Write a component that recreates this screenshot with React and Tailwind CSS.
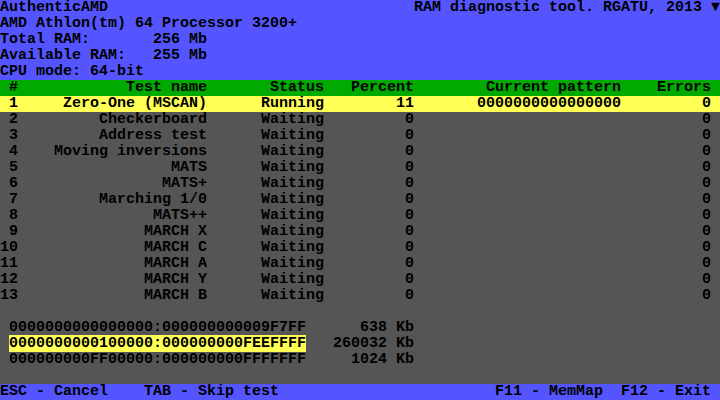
import React from 'react';

const tests = [
    ['Zero-One (MSCAN)', 'Running', '11', '0000000000000000', '0'],
    ['Checkerboard', 'Waiting', '0', '', '0'],
    ['Address test', 'Waiting', '0', '', '0'],
    ['Moving inversions', 'Waiting', '0', '', '0'],
    ['MATS', 'Waiting', '0', '', '0'],
    ['MATS+', 'Waiting', '0', '', '0'],
    ['Marching 1/0', 'Waiting', '0', '', '0'],
    ['MATS++', 'Waiting', '0', '', '0'],
    ['MARCH X', 'Waiting', '0', '', '0'],
    ['MARCH C', 'Waiting', '0', '', '0'],
    ['MARCH A', 'Waiting', '0', '', '0'],
    ['MARCH Y', 'Waiting', '0', '', '0'],
    ['MARCH B', 'Waiting', '0', '', '0'],
];

const ranges = [
    ['0000000000000000:000000000009F7FF', '638 Kb', false],
    ['0000000000100000:000000000FEEFFFF', '260032 Kb', true],
    ['000000000FF00000:000000000FFFFFFF', '1024 Kb', false],
];

// text mode: 80 cols x 25 rows, 9x16 cells
const pad = (s, n) => String(s).padStart(n, ' ');
const tableLine = (a, b, c, d, e, f) =>
    pad(a, 2) + pad(b, 21) + pad(c, 13) + pad(d, 10) + pad(e, 23) + pad(f, 10) + ' ';

function Line({ className = '', children }) {
    return <div className={`h-4 whitespace-pre ${className}`}>{children}</div>;
}

export default function App() {
    return (
        <div
            className="w-[720px] h-[400px] overflow-hidden bg-[#555555] text-black text-[15px] leading-4 font-bold"
            style={{ fontFamily: '"Liberation Mono", "DejaVu Sans Mono", monospace' }}
        >
            <div className="bg-[#5555ff]">
                <Line className="flex justify-between">
                    <span>AuthenticAMD</span>
                    <span>{'RAM diagnostic tool. RGATU, 2013 ▼'}</span>
                </Line>
                <Line>AMD Athlon(tm) 64 Processor 3200+</Line>
                <Line>{'Total RAM:       256 Mb'}</Line>
                <Line>{'Available RAM:   255 Mb'}</Line>
                <Line>CPU mode: 64-bit</Line>
            </div>

            <Line className="bg-[#00aa00]">
                {tableLine('#', 'Test name', 'Status', 'Percent', 'Current pattern', 'Errors')}
            </Line>

            {tests.map((t, i) => (
                <Line key={i} className={i === 0 ? 'bg-[#ffff55]' : ''}>
                    {tableLine(i + 1, ...t)}
                </Line>
            ))}

            <Line />

            {ranges.map(([r, size, active]) => (
                <Line key={r}>
                    {' '}
                    <span className={active ? 'bg-[#ffff55]' : ''}>{r}</span>
                    {pad(size, 12)}
                </Line>
            ))}

            <Line />

            <Line className="bg-[#5555ff] flex justify-between">
                <span>{'ESC - Cancel    TAB - Skip test'}</span>
                <span>{'F11 - MemMap  F12 - Exit '}</span>
            </Line>
        </div>
    );
}
